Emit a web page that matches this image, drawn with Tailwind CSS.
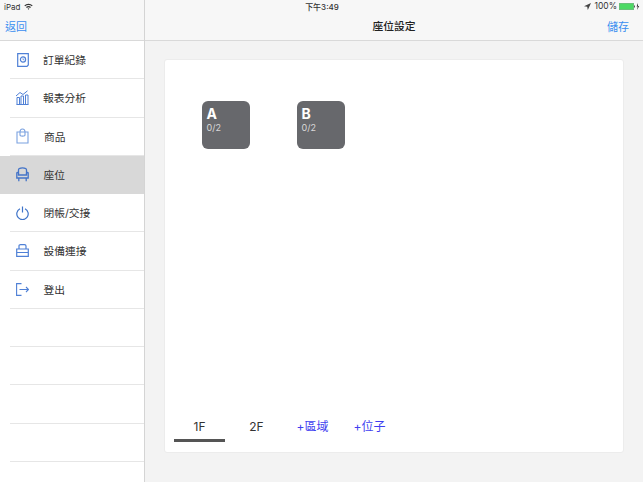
<!DOCTYPE html>
<html lang="zh-Hant">
<head>
<meta charset="utf-8">
<script src="https://cdn.jsdelivr.net/npm/@tailwindcss/browser@4"></script>
</head>
<body class="m-0 bg-[#f3f3f3]">
<div class="relative flex w-[643px] h-[482px] overflow-hidden font-['Inter','Noto_Sans_CJK_TC',sans-serif] text-[#333]">
  <!-- status bar -->
  <div class="absolute top-0 left-0 w-full h-[13px] flex items-center justify-between pl-[4px] pr-[3px] text-[8px] leading-none z-10 text-[#333]">
    <div class="flex items-center gap-[4px] w-[200px]">
      <span>iPad</span>
      <svg width="9" height="7" viewBox="0 0 9 7"><path d="M0.3 2.4A6 6 0 0 1 8.7 2.4L7.8 3.3A4.7 4.700 0 0 0 1.200 3.300Z M2 4.100A3.600 3.600 0 0 1 7 4.100L6.100 5A2.300 2.300 0 0 0 2.900 5Z M3.600 5.700A1.300 1.300 0 0 1 5.400 5.700L4.500 6.700Z" fill="#333"/></svg>
    </div>
    <span class="font-medium">下午3:49</span>
    <div class="flex items-center justify-end w-[200px]">
      <svg class="mr-[3px]" width="7" height="7" viewBox="0 0 7 7"><path d="M7 0L0 3.200L3.200 3.800L3.800 7Z" fill="#444"/></svg>
      <span class="mr-[2px] text-[8.500px]">100%</span>
      <div class="w-[15px] h-[7px] bg-[#4cd964] border border-[#999]/40"></div>
      <svg class="ml-[0px]" width="6" height="7" viewBox="0 0 6 7"><rect x="0" y="2.500" width="1" height="2" fill="#555"/><path d="M4 0L2.600 3.600H3.700L3 7L5.200 3H4Z" fill="#333"/></svg>
    </div>
  </div>

  <!-- sidebar -->
  <aside class="w-[145px] h-full shrink-0 flex flex-col bg-white border-r border-[#d4d4d4]">
    <div class="h-[41px] shrink-0 bg-[#f7f7f7] border-b border-[#d9d9d9] flex items-end pb-[6px] pl-[5px]">
      <span class="text-[11px] leading-[14px] text-[#3a8ef0]">返回</span>
    </div>
    <nav class="flex flex-col">
      <div class="h-[38.25px] flex items-center pl-[10px]">
        <div class="flex items-center h-full w-full border-b border-[#e6e6e6]">
          <svg class="ml-[7px] w-[12px] h-[14px]" viewBox="0 0 12 14" fill="none" stroke="#4f80d6" stroke-width="1.200"><path d="M.7 .7H11.300V12L10 13.300H.7Z"/><circle cx="6" cy="6.500" r="2.600"/><path d="M6 5.200V6.700H7.200" stroke-width=".7"/></svg>
          <span class="ml-[14px] mt-[2px] text-[10.750px]">訂單紀錄</span>
        </div>
      </div>
      <div class="h-[38.25px] flex items-center pl-[10px]">
        <div class="flex items-center h-full w-full border-b border-[#e6e6e6]">
          <svg class="ml-[5px] w-[14px] h-[15px]" viewBox="0 0 14 15" fill="none" stroke="#4f80d6" stroke-width="1"><path d="M2 14.500V7.500H4.500V14.500M6 14.500V6H8.500V14.500M10.500 14.500V5H13V14.500M1.500 14.500H13.500M1 6L5 2.500L8 4.500L12.500 .8"/></svg>
          <span class="ml-[14px] mt-[3px] text-[10.750px]">報表分析</span>
        </div>
      </div>
      <div class="h-[38.25px] flex items-center pl-[10px]">
        <div class="flex items-center h-full w-full border-b border-[#e6e6e6]">
          <svg class="ml-[6px] w-[13px] h-[16px]" viewBox="0 0 13 16" fill="none" stroke="#7ba2e0" stroke-width="1.100"><path d="M1 4H12V15H1Z"/><path d="M4 4C4 1.500 5 1 6.500 1S9 1.500 9 4V7C9 8.500 4 8.500 4 7Z"/></svg>
          <span class="ml-[15px] mt-[3px] text-[10.750px]">商品</span>
        </div>
      </div>
      <div class="h-[38.25px] flex items-center bg-[#d8d8d8] pl-[16px]">
        <svg class="w-[13px] h-[15px]" viewBox="0 0 13 15" fill="none" stroke="#4474c8" stroke-width="1.300"><path d="M2.500 7V3C2.500 1.300 4 .8 6.500 .8S10.500 1.300 10.500 3V7"/><path d="M.8 6C.8 5 2.500 5 2.500 6.500V8H10.500V6.500C10.500 5 12.200 5 12.200 6V11H.8ZM2.800 11V14.300M10.200 11V14.300"/></svg>
        <span class="ml-[14.500px] mt-[2px] text-[10.750px]">座位</span>
      </div>
      <div class="h-[38.250px] flex items-center pl-[10px]">
        <div class="flex items-center h-full w-full border-b border-[#e6e6e6]">
          <svg class="ml-[6px] w-[13px] h-[14px]" viewBox="0 0 13 14" fill="none" stroke="#3f74c9" stroke-width="1.200"><path d="M4 2.800A5.700 5.700 0 1 0 9 2.800M6.500 .5V6.500"/></svg>
          <span class="ml-[14.500px] mt-[2px] text-[10.750px]">閉帳/交接</span>
        </div>
      </div>
      <div class="h-[38.250px] flex items-center pl-[10px]">
        <div class="flex items-center h-full w-full border-b border-[#e6e6e6]">
          <svg class="ml-[6px] w-[13px] h-[13px]" viewBox="0 0 13 13" fill="none" stroke="#4f80d6" stroke-width="1.200"><path d="M3 5V2C3 1 3.500 .7 4.500 .7H8.500C9.500 .7 10 1 10 2V5M.7 5H12.300V12.300H.7ZM.7 8.500H12.300"/></svg>
          <span class="ml-[14.500px] mt-[3px] text-[10.750px]">設備連接</span>
        </div>
      </div>
      <div class="h-[38.250px] flex items-center pl-[10px]">
        <div class="flex items-center h-full w-full border-b border-[#e6e6e6]">
          <svg class="ml-[6px] w-[13px] h-[13px]" viewBox="0 0 13 13" fill="none" stroke="#4f80d6" stroke-width="1.100"><path d="M5.500 .6H.6V12.400H5.500M3.500 6.500H12.500M10 4L12.500 6.500L10 9"/></svg>
          <span class="ml-[14.500px] mt-[3px] text-[10.750px]">登出</span>
        </div>
      </div>
      <div class="h-[38.250px] ml-[10px] border-b border-[#e6e6e6]"></div>
      <div class="h-[38.250px] ml-[10px] border-b border-[#e6e6e6]"></div>
      <div class="h-[38.250px] ml-[10px] border-b border-[#e6e6e6]"></div>
      <div class="h-[38.250px] ml-[10px] border-b border-[#e6e6e6]"></div>
    </nav>
  </aside>

  <!-- main -->
  <main class="flex-1 flex flex-col min-w-0">
    <header class="relative h-[41px] shrink-0 bg-[#f7f7f7] border-b border-[#d9d9d9] flex items-end justify-center pb-[6px]">
      <span class="text-[10.750px] leading-[14px] font-medium text-[#222]">座位設定</span>
      <span class="absolute right-[14px] bottom-[6px] text-[11px] leading-[14px] text-[#3a8ef0]">儲存</span>
    </header>
    <div class="flex-1 pt-[18px] pl-[19px] pr-[19px] pb-[29px]">
      <section class="h-full flex flex-col bg-white rounded-[3px] border border-[#ececec] pl-[9px]">
        <div class="flex-1 flex gap-[47px] pt-[41px] pl-[28px]">
          <div class="w-[48px] h-[48px] rounded-[6px] bg-[#67686c] pl-[4.500px] pt-[5px] text-white">
            <div class="text-[14px] leading-[16px] font-bold">A</div>
            <div class="text-[9px] leading-[12px] text-white/75">0/2</div>
          </div>
          <div class="w-[48px] h-[48px] rounded-[6px] bg-[#67686c] pl-[4.500px] pt-[5px] text-white">
            <div class="text-[14px] leading-[16px] font-bold">B</div>
            <div class="text-[9px] leading-[12px] text-white/75">0/2</div>
          </div>
        </div>
        <div class="flex h-[30px] mb-[10px] text-[12px]">
          <div class="w-[51px] mr-[6px] flex justify-center pt-[6px] border-b-[3px] border-[#555]">1F</div>
          <div class="w-[51px] mr-[6px] flex justify-center pt-[6px]">2F</div>
          <div class="w-[51px] mr-[6px] flex justify-center pt-[6px] pr-[2px] text-[#3f3ff0]">+區域</div>
          <div class="w-[51px] flex justify-center pt-[6px] pr-[2px] text-[#3f3ff0]">+位子</div>
        </div>
      </section>
    </div>
  </main>
</div>
</body>
</html>
